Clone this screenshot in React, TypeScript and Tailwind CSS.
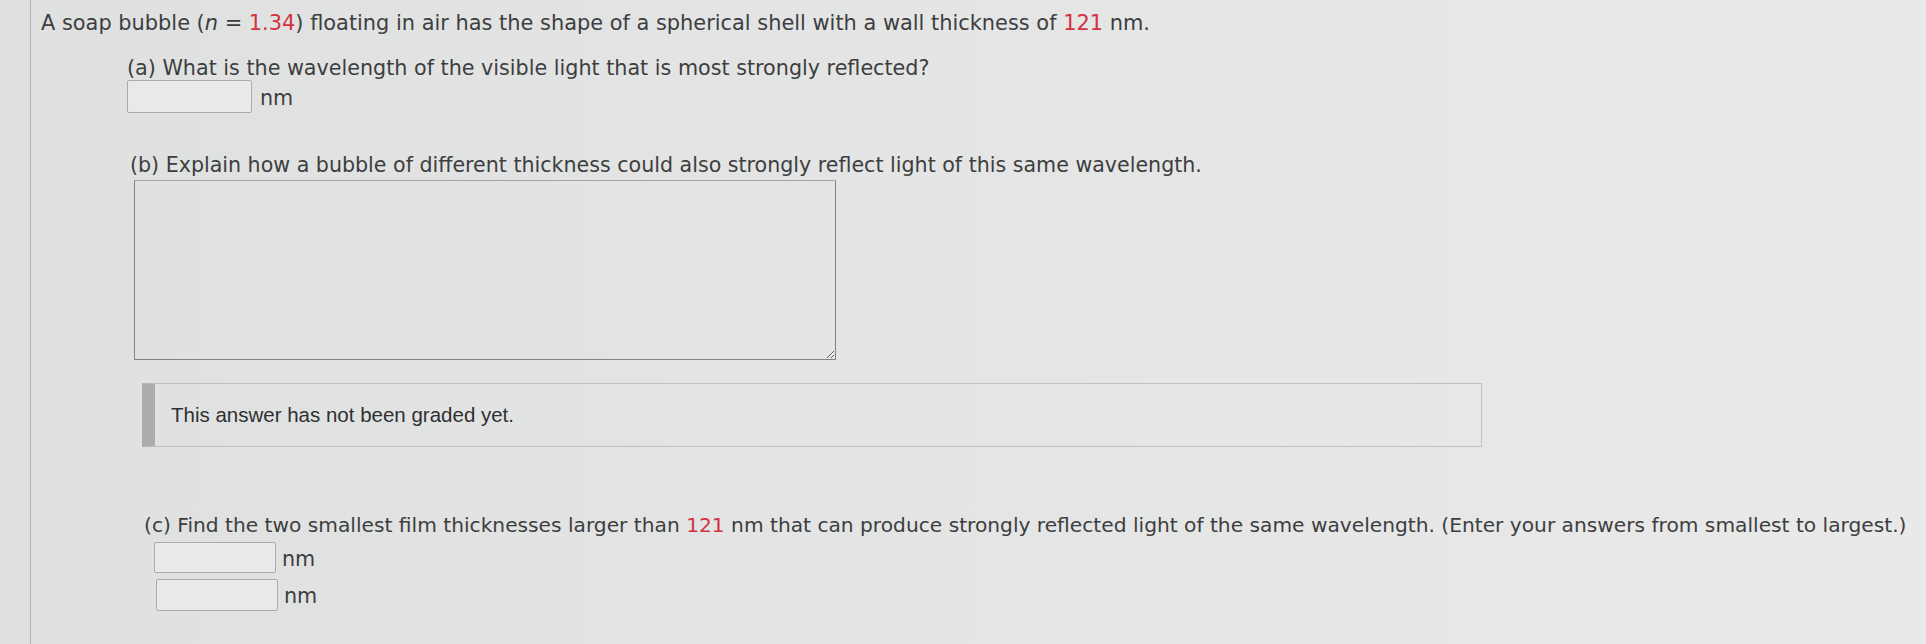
import React from "react";

const Red = ({ children }: { children: React.ReactNode }) => (
  <span className="text-[#d3323e]">{children}</span>
);

function AnswerBox({ className }: { className?: string }) {
  return (
    <input
      type="text"
      className={
        "block rounded-[2px] border border-[#a9abaa] bg-[#e8e9e8] outline-none " +
        (className ?? "")
      }
    />
  );
}

export default function App() {
  return (
    <div className="h-[644px] w-full overflow-hidden bg-gradient-to-r from-[#dfe1e0] to-[#e9e9e9] font-['DejaVu_Sans',sans-serif] text-[20.7px] leading-[24px] text-[#3d3e40]">
      <div className="ml-[30px] h-full border-l border-[#b3b5b4] pt-[11px]">
        <p className="ml-[10px] whitespace-nowrap text-[20.9px]">
          A soap bubble (<i>n</i> = <Red>1.34</Red>) floating in air has the shape of a spherical shell with a wall
          thickness of <Red>121</Red> nm.
        </p>

        <div className="ml-[96px] mt-[21px]">
          <p className="whitespace-nowrap">(a) What is the wavelength of the visible light that is most strongly reflected?</p>
          <div className="flex items-center gap-[8px]">
            <AnswerBox className="h-[33px] w-[125px]" />
            <span className="mt-[2px]">nm</span>
          </div>
        </div>

        <div className="ml-[99px] mt-[40px]">
          <p className="whitespace-nowrap text-[20.6px]">
            (b) Explain how a bubble of different thickness could also strongly reflect light of this same wavelength.
          </p>
          <textarea className="ml-[4px] mt-[3px] block h-[180px] w-[702px] rounded-[1px] border border-[#818383] border-t-[#a3a5a4] bg-transparent outline-none" />
        </div>

        <div className="ml-[111px] mt-[23px] flex h-[64px] w-[1340px] items-center border border-l-[13px] border-[#bfc1c0] border-l-[#abadac] pl-[16px] font-['Liberation_Sans',Arial,sans-serif] text-[20.5px] text-[#2f3032]">
          This answer has not been graded yet.
        </div>

        <div className="ml-[113px] mt-[66px]">
          <p className="whitespace-nowrap text-[20.2px]">
            (c) Find the two smallest film thicknesses larger than <Red>121</Red> nm that can produce strongly reflected
            light of the same wavelength. (Enter your answers from smallest to largest.)
          </p>
          <div className="ml-[10px] mt-[5px] flex items-center gap-[6px]">
            <AnswerBox className="h-[31px] w-[122px]" />
            <span className="mt-[2px]">nm</span>
          </div>
          <div className="ml-[12px] mt-[6px] flex items-center gap-[6px]">
            <AnswerBox className="h-[32px] w-[122px]" />
            <span className="mt-[2px]">nm</span>
          </div>
        </div>
      </div>
    </div>
  );
}
